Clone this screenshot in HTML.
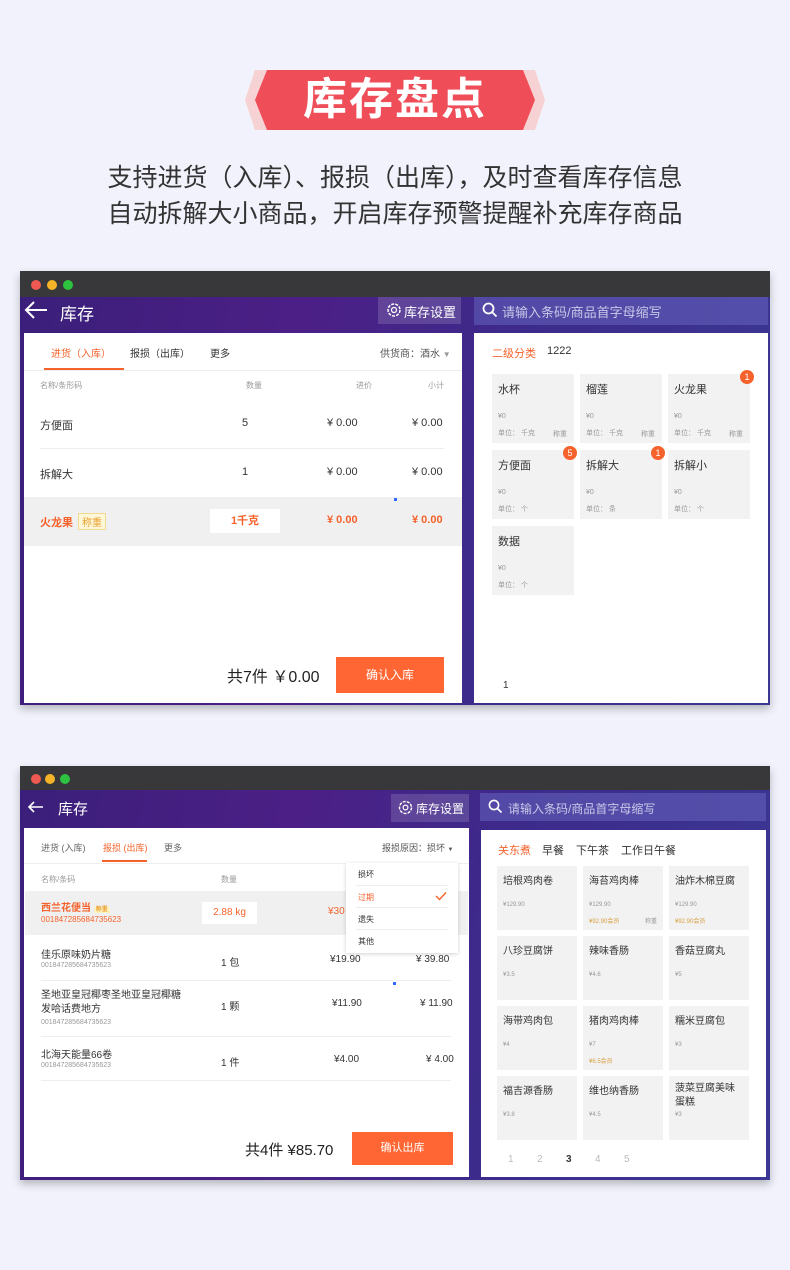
<!DOCTYPE html>
<html><head><meta charset="utf-8"><style>
*{margin:0;padding:0;box-sizing:border-box}
body{width:790px;height:1270px;background:#f1f2fb;position:relative;overflow:hidden;font-family:"Liberation Sans","Noto Sans CJK SC",sans-serif;color:#333}
.a{position:absolute;white-space:nowrap}
.win{position:absolute;left:20px;width:750px;background:linear-gradient(100deg,#3a1f7a 0%,#4c1f86 35%,#3d2a8a 60%,#3b3793 100%);box-shadow:0 4px 8px rgba(0,0,0,.25)}
.tb{position:absolute;left:0;top:0;width:750px;background:#38383a}
.dot{position:absolute;width:10px;height:10px;border-radius:50%}
.panel{position:absolute;background:#fff}
.card{position:absolute;background:#f2f2f2;width:82px}
.badge{position:absolute;width:14px;height:14px;border-radius:50%;background:#f5622b;color:#fff;font-size:9px;text-align:center;line-height:14px}
.s{font-size:7px;color:#999}
.or{color:#f5622b}
.hr{position:absolute;height:1px;background:#eee}
</style></head><body>

<!-- banner -->
<svg class="a" style="left:243px;top:68px" width="304" height="64">
<polygon points="12,2 292,2 302,32 292,62 12,62 2,32" fill="#f7d2d4"/>
<polygon points="24,2 280,2 292,32 280,62 24,62 12,32" fill="#ef4d57"/>
</svg>
<div class="a" style="left:243px;top:70px;width:304px;text-align:center;font-size:44px;line-height:60px;font-weight:bold;color:#fff;letter-spacing:2px">库存盘点</div>
<div class="a" style="left:0;top:158px;width:790px;text-align:center;font-size:25px;color:#333">支持进货（入库）、报损（出库），及时查看库存信息</div>
<div class="a" style="left:0;top:194px;width:790px;text-align:center;font-size:25px;color:#333">自动拆解大小商品，开启库存预警提醒补充库存商品</div>

<!-- window 1 -->
<div class="win" style="top:271px;height:434px">
<div class="tb" style="height:26px"></div>
<div class="dot" style="left:11px;top:9px;background:#ee5a52"></div>
<div class="dot" style="left:27px;top:9px;background:#f5b428"></div>
<div class="dot" style="left:43px;top:9px;background:#2dc23f"></div>
<svg class="a" style="left:3px;top:29px" width="26" height="20"><path d="M24 10H3M11 2L3 10l8 8" stroke="#fff" stroke-width="2" fill="none"/></svg>
<div class="a" style="left:40px;top:29px;font-size:17px;color:#fff">库存</div>
<div class="a" style="left:358px;top:26px;width:83px;height:27px;background:rgba(255,255,255,.15)"></div>
<svg class="a" style="left:366px;top:31px" width="16" height="16"><circle cx="8" cy="8" r="6" stroke="#fff" stroke-width="1.5" fill="none" stroke-dasharray="3 1.2"/><circle cx="8" cy="8" r="2.5" stroke="#fff" stroke-width="1.3" fill="none"/></svg>
<div class="a" style="left:384px;top:31px;font-size:13px;color:#fff">库存设置</div>
<div class="a" style="left:454px;top:26px;width:294px;height:28px;background:rgba(110,110,200,.45)"></div>
<svg class="a" style="left:462px;top:31px" width="16" height="16"><circle cx="6.5" cy="6.5" r="5" stroke="#fff" stroke-width="1.8" fill="none"/><path d="M10 10l4.5 4.5" stroke="#fff" stroke-width="1.8"/></svg>
<div class="a" style="left:482px;top:31px;font-size:13px;color:#c8c8e8">请输入条码/商品首字母缩写</div>

<div class="panel" style="left:4px;top:62px;width:438px;height:370px">
 <div class="a or" style="left:27px;top:12px;font-size:10px">进货（入库）</div>
 <div class="a" style="left:20px;top:35px;width:80px;height:2px;background:#f5622b"></div>
 <div class="a" style="left:106px;top:12px;font-size:10px">报损（出库）</div>
 <div class="a" style="left:186px;top:12px;font-size:10px">更多</div>
 <div class="a" style="left:356px;top:12px;font-size:10px;color:#555">供货商：酒水 <span style="color:#999;font-size:8px">▼</span></div>
 <div class="hr" style="left:0;top:37px;width:438px"></div>
 <div class="a s" style="left:16px;top:47px;font-size:8px">名称/条形码</div>
 <div class="a s" style="left:222px;top:47px;font-size:8px">数量</div>
 <div class="a s" style="left:332px;top:47px;font-size:8px">进价</div>
 <div class="a s" style="left:404px;top:47px;font-size:8px">小计</div>
 <div class="a" style="left:16px;top:84px;font-size:11px">方便面</div>
 <div class="a" style="left:218px;top:84px;font-size:11px">5</div>
 <div class="a" style="left:303px;top:84px;font-size:11px">¥ 0.00</div>
 <div class="a" style="left:388px;top:84px;font-size:11px">¥ 0.00</div>
 <div class="hr" style="left:16px;top:115px;width:404px"></div>
 <div class="a" style="left:16px;top:133px;font-size:11px">拆解大</div>
 <div class="a" style="left:218px;top:133px;font-size:11px">1</div>
 <div class="a" style="left:303px;top:133px;font-size:11px">¥ 0.00</div>
 <div class="a" style="left:388px;top:133px;font-size:11px">¥ 0.00</div>
 <div class="a" style="left:0;top:164px;width:438px;height:49px;background:#f0f0f0"></div>
 <div class="a" style="left:370px;top:165px;width:3px;height:3px;background:#2f6bff"></div>
 <div class="a or" style="left:16px;top:181px;font-size:11px;font-weight:bold">火龙果</div>
 <div class="a" style="left:54px;top:180px;font-size:10px;color:#e8a030;background:#fff8d8;border:1px solid #f3da90;padding:0 3px">称重</div>
 <div class="a or" style="left:186px;top:176px;width:70px;height:24px;background:#fff;text-align:center;line-height:24px;font-size:11px;font-weight:bold">1千克</div>
 <div class="a or" style="left:303px;top:181px;font-size:11px;font-weight:bold">¥ 0.00</div>
 <div class="a or" style="left:388px;top:181px;font-size:11px;font-weight:bold">¥ 0.00</div>
 <div class="a" style="left:203px;top:330px;font-size:16px;color:#222">共7件 ￥0.00</div>
 <div class="a" style="left:312px;top:324px;width:108px;height:36px;background:#ff6633;color:#fff;font-size:12px;text-align:center;line-height:36px">确认入库</div>
</div>

<div class="panel" style="left:454px;top:62px;width:294px;height:370px">
 <div class="a or" style="left:18px;top:12px;font-size:11px">二级分类</div>
 <div class="a" style="left:73px;top:12px;font-size:11px">1222</div>
 <div class="card" style="left:18px;top:41px;height:69px"><div class="a" style="left:6px;top:7px;font-size:11px">水杯</div><div class="a s" style="left:6px;top:39px">¥0</div><div class="a s" style="left:6px;top:54px">单位： 千克</div><div class="a s" style="left:61px;top:55px">称重</div></div>
 <div class="card" style="left:106px;top:41px;height:69px"><div class="a" style="left:6px;top:7px;font-size:11px">榴莲</div><div class="a s" style="left:6px;top:39px">¥0</div><div class="a s" style="left:6px;top:54px">单位： 千克</div><div class="a s" style="left:61px;top:55px">称重</div></div>
 <div class="card" style="left:194px;top:41px;height:69px"><div class="a" style="left:6px;top:7px;font-size:11px">火龙果</div><div class="a s" style="left:6px;top:39px">¥0</div><div class="a s" style="left:6px;top:54px">单位： 千克</div><div class="a s" style="left:61px;top:55px">称重</div></div>
 <div class="badge" style="left:266px;top:37px">1</div>
 <div class="card" style="left:18px;top:117px;height:69px"><div class="a" style="left:6px;top:7px;font-size:11px">方便面</div><div class="a s" style="left:6px;top:39px">¥0</div><div class="a s" style="left:6px;top:54px">单位： 个</div></div>
 <div class="badge" style="left:89px;top:113px">5</div>
 <div class="card" style="left:106px;top:117px;height:69px"><div class="a" style="left:6px;top:7px;font-size:11px">拆解大</div><div class="a s" style="left:6px;top:39px">¥0</div><div class="a s" style="left:6px;top:54px">单位： 条</div></div>
 <div class="badge" style="left:177px;top:113px">1</div>
 <div class="card" style="left:194px;top:117px;height:69px"><div class="a" style="left:6px;top:7px;font-size:11px">拆解小</div><div class="a s" style="left:6px;top:39px">¥0</div><div class="a s" style="left:6px;top:54px">单位： 个</div></div>
 <div class="card" style="left:18px;top:193px;height:69px"><div class="a" style="left:6px;top:7px;font-size:11px">数据</div><div class="a s" style="left:6px;top:39px">¥0</div><div class="a s" style="left:6px;top:54px">单位： 个</div></div>
 <div class="a" style="left:29px;top:347px;font-size:10px">1</div>
</div>
</div>

<!-- window 2 -->
<div class="win" style="top:766px;height:414px">
<div class="tb" style="height:24px"></div>
<div class="dot" style="left:11px;top:8px;background:#ee5a52"></div>
<div class="dot" style="left:25px;top:8px;background:#f5b428"></div>
<div class="dot" style="left:40px;top:8px;background:#2dc23f"></div>
<svg class="a" style="left:7px;top:34px" width="18" height="14"><path d="M16 7H2M7 2L2 7l5 5" stroke="#fff" stroke-width="1.6" fill="none"/></svg>
<div class="a" style="left:38px;top:32px;font-size:15px;color:#fff">库存</div>
<div class="a" style="left:371px;top:28px;width:78px;height:28px;background:rgba(255,255,255,.15)"></div>
<svg class="a" style="left:378px;top:34px" width="15" height="15"><circle cx="7.5" cy="7.5" r="6" stroke="#fff" stroke-width="1.4" fill="none" stroke-dasharray="3 1.2"/><circle cx="7.5" cy="7.5" r="2.4" stroke="#fff" stroke-width="1.2" fill="none"/></svg>
<div class="a" style="left:396px;top:34px;font-size:12px;color:#fff">库存设置</div>
<div class="a" style="left:460px;top:27px;width:286px;height:28px;background:rgba(110,110,200,.45)"></div>
<svg class="a" style="left:468px;top:33px" width="15" height="15"><circle cx="6" cy="6" r="4.6" stroke="#fff" stroke-width="1.6" fill="none"/><path d="M9.5 9.5l4 4" stroke="#fff" stroke-width="1.6"/></svg>
<div class="a" style="left:488px;top:34px;font-size:12px;color:#c8c8e8">请输入条码/商品首字母缩写</div>

<div class="panel" style="left:4px;top:62px;width:445px;height:349px">
 <div class="a" style="left:17px;top:13px;font-size:9px;color:#666">进货 (入库)</div>
 <div class="a or" style="left:79px;top:13px;font-size:9px">报损 (出库)</div>
 <div class="a" style="left:78px;top:32px;width:45px;height:2px;background:#f5622b"></div>
 <div class="a" style="left:140px;top:13px;font-size:9px;color:#666">更多</div>
 <div class="a" style="left:358px;top:13px;font-size:9px;color:#555">报损原因：损坏 <span style="font-size:6px">▼</span></div>
 <div class="hr" style="left:0;top:35px;width:445px"></div>
 <div class="a s" style="left:17px;top:46px;font-size:8px">名称/条码</div>
 <div class="a s" style="left:197px;top:46px;font-size:8px">数量</div>
 <div class="a" style="left:1px;top:63px;width:443px;height:44px;background:#f0f0f0"></div>
 <div class="a or" style="left:17px;top:71px;font-size:10px;font-weight:bold">西兰花便当 <span style="font-size:6px;background:#fff3c0;color:#e8a030;padding:0 2px">称重</span></div>
 <div class="a or" style="left:17px;top:87px;font-size:8px">001847285684735623</div>
 <div class="a or" style="left:178px;top:74px;width:55px;height:22px;background:#fff;text-align:center;line-height:22px;font-size:10px">2.88 kg</div>
 <div class="a or" style="left:304px;top:78px;font-size:10px">¥30</div>
 <div class="a" style="left:17px;top:118px;font-size:10px">佳乐原味奶片糖</div>
 <div class="a s" style="left:17px;top:134px">001847285684735623</div>
 <div class="a" style="left:197px;top:126px;font-size:10px">1 包</div>
 <div class="a" style="left:306px;top:126px;font-size:10px">¥19.90</div>
 <div class="a" style="left:392px;top:126px;font-size:10px">¥ 39.80</div>
 <div class="hr" style="left:17px;top:152px;width:410px"></div>
 <div class="a" style="left:369px;top:154px;width:3px;height:3px;background:#2f6bff"></div>
 <div class="a" style="left:17px;top:161px;font-size:10px;line-height:14px">圣地亚皇冠椰枣圣地亚皇冠椰糖<br>发哈话费地方</div>
 <div class="a s" style="left:17px;top:191px">001847285684735623</div>
 <div class="a" style="left:197px;top:170px;font-size:10px">1 颗</div>
 <div class="a" style="left:308px;top:170px;font-size:10px">¥11.90</div>
 <div class="a" style="left:396px;top:170px;font-size:10px">¥ 11.90</div>
 <div class="hr" style="left:17px;top:208px;width:410px"></div>
 <div class="a" style="left:17px;top:218px;font-size:10px">北海天能量66卷</div>
 <div class="a s" style="left:17px;top:234px">001847285684735623</div>
 <div class="a" style="left:197px;top:226px;font-size:10px">1 件</div>
 <div class="a" style="left:310px;top:226px;font-size:10px">¥4.00</div>
 <div class="a" style="left:402px;top:226px;font-size:10px">¥ 4.00</div>
 <div class="hr" style="left:17px;top:252px;width:410px"></div>
 <!-- dropdown -->
 <div class="a" style="left:322px;top:35px;width:112px;height:90px;background:#fff;box-shadow:0 1px 4px rgba(0,0,0,.18)">
  <div class="a" style="left:12px;top:6px;font-size:8px">损坏</div>
  <div class="hr" style="left:10px;top:22px;width:92px"></div>
  <div class="a or" style="left:12px;top:29px;font-size:8px">过期</div>
  <svg class="a" style="left:89px;top:28px" width="12" height="10"><path d="M1 5l3.5 3.5L11 1.5" stroke="#f5622b" stroke-width="1.4" fill="none"/></svg>
  <div class="hr" style="left:10px;top:44px;width:92px"></div>
  <div class="a" style="left:12px;top:51px;font-size:8px">遗失</div>
  <div class="hr" style="left:10px;top:66px;width:92px"></div>
  <div class="a" style="left:12px;top:73px;font-size:8px">其他</div>
 </div>
 <div class="a" style="left:221px;top:311px;font-size:15px;color:#222">共4件 ¥85.70</div>
 <div class="a" style="left:328px;top:304px;width:101px;height:33px;background:#ff6633;color:#fff;font-size:11px;text-align:center;line-height:33px">确认出库</div>
</div>

<div class="panel" style="left:461px;top:64px;width:285px;height:347px">
 <div class="a or" style="left:17px;top:12px;font-size:11px">关东煮</div>
 <div class="a" style="left:61px;top:12px;font-size:11px">早餐</div>
 <div class="a" style="left:95px;top:12px;font-size:11px">下午茶</div>
 <div class="a" style="left:140px;top:12px;font-size:11px">工作日午餐</div>
 <div class="card" style="left:16px;top:36px;width:80px;height:64px"><div class="a" style="left:6px;top:6px;font-size:10px">培根鸡肉卷</div><div class="a s" style="left:6px;top:36px;font-size:6px">¥129.90</div></div>
 <div class="card" style="left:102px;top:36px;width:80px;height:64px"><div class="a" style="left:6px;top:6px;font-size:10px">海苔鸡肉棒</div><div class="a s" style="left:6px;top:36px;font-size:6px">¥129.90</div><div class="a" style="left:6px;top:50px;font-size:6px;color:#d8a040">¥92.90会员</div><div class="a s" style="left:62px;top:50px;font-size:6px">称重</div></div>
 <div class="card" style="left:188px;top:36px;width:80px;height:64px"><div class="a" style="left:6px;top:6px;font-size:10px">油炸木棉豆腐</div><div class="a s" style="left:6px;top:36px;font-size:6px">¥129.90</div><div class="a" style="left:6px;top:50px;font-size:6px;color:#d8a040">¥92.90会员</div></div>
 <div class="card" style="left:16px;top:106px;width:80px;height:64px"><div class="a" style="left:6px;top:6px;font-size:10px">八珍豆腐饼</div><div class="a s" style="left:6px;top:36px;font-size:6px">¥3.5</div></div>
 <div class="card" style="left:102px;top:106px;width:80px;height:64px"><div class="a" style="left:6px;top:6px;font-size:10px">辣味香肠</div><div class="a s" style="left:6px;top:36px;font-size:6px">¥4.6</div></div>
 <div class="card" style="left:188px;top:106px;width:80px;height:64px"><div class="a" style="left:6px;top:6px;font-size:10px">香菇豆腐丸</div><div class="a s" style="left:6px;top:36px;font-size:6px">¥5</div></div>
 <div class="card" style="left:16px;top:176px;width:80px;height:64px"><div class="a" style="left:6px;top:6px;font-size:10px">海带鸡肉包</div><div class="a s" style="left:6px;top:36px;font-size:6px">¥4</div></div>
 <div class="card" style="left:102px;top:176px;width:80px;height:64px"><div class="a" style="left:6px;top:6px;font-size:10px">猪肉鸡肉棒</div><div class="a s" style="left:6px;top:36px;font-size:6px">¥7</div><div class="a" style="left:6px;top:50px;font-size:6px;color:#d8a040">¥6.5会员</div></div>
 <div class="card" style="left:188px;top:176px;width:80px;height:64px"><div class="a" style="left:6px;top:6px;font-size:10px">糯米豆腐包</div><div class="a s" style="left:6px;top:36px;font-size:6px">¥3</div></div>
 <div class="card" style="left:16px;top:246px;width:80px;height:64px"><div class="a" style="left:6px;top:6px;font-size:10px">福吉源香肠</div><div class="a s" style="left:6px;top:36px;font-size:6px">¥3.8</div></div>
 <div class="card" style="left:102px;top:246px;width:80px;height:64px"><div class="a" style="left:6px;top:6px;font-size:10px">维也纳香肠</div><div class="a s" style="left:6px;top:36px;font-size:6px">¥4.5</div></div>
 <div class="card" style="left:188px;top:246px;width:80px;height:64px"><div class="a" style="left:6px;top:6px;font-size:10px;line-height:14px">菠菜豆腐美味<br>蛋糕</div><div class="a s" style="left:6px;top:36px;font-size:6px">¥3</div></div>
 <div class="a" style="left:27px;top:324px;font-size:10px;color:#bbb">1</div>
 <div class="a" style="left:56px;top:324px;font-size:10px;color:#bbb">2</div>
 <div class="a" style="left:85px;top:324px;font-size:10px;color:#333;font-weight:bold">3</div>
 <div class="a" style="left:114px;top:324px;font-size:10px;color:#bbb">4</div>
 <div class="a" style="left:143px;top:324px;font-size:10px;color:#bbb">5</div>
</div>
</div>
</body></html>
